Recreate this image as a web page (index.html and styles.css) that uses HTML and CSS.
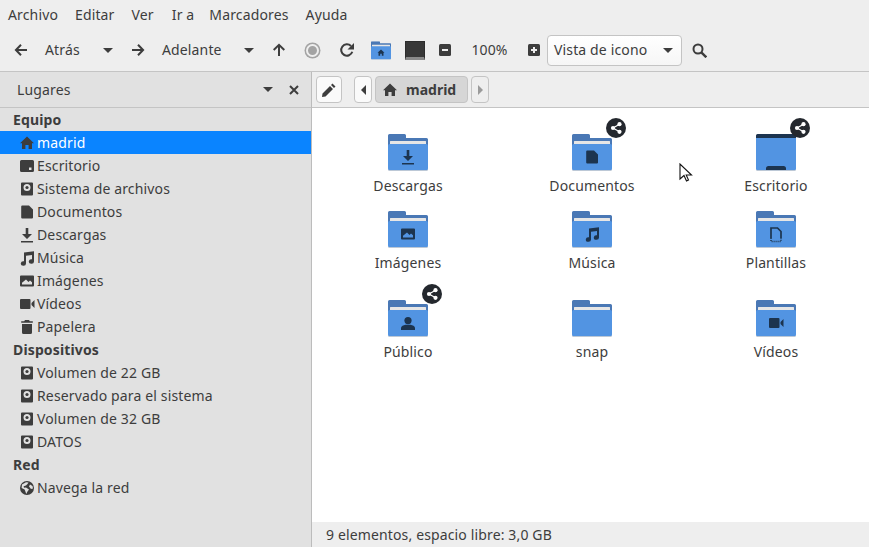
FILE: index.html
```html
<!DOCTYPE html>
<html lang="es">
<head>
  <meta charset="UTF-8" />
  <title>madrid</title>
  <meta name="viewport" content="width=device-width, initial-scale=1">
  <link rel="stylesheet" href="styles.css">
</head>
<body>
  <svg class="defs" width="0" height="0">
    <symbol id="i-home" viewBox="0 0 16 16"><path d="M8 1.500 15 8.200h-2V14H9.600v-4H6.400v4H3V8.200H1z"/></symbol>
    <symbol id="i-desktop" viewBox="0 0 16 16"><path fill-rule="evenodd" d="M2.500 2h11A1.500 1.500 0 0 1 15 3.500v9a1.500 1.500 0 0 1-1.500 1.500h-11A1.500 1.500 0 0 1 1 12.500v-9A1.500 1.500 0 0 1 2.500 2zM10 9.500V12h2.500V9.500z"/></symbol>
    <symbol id="i-drive" viewBox="0 0 16 16"><path fill-rule="evenodd" d="M3 1.500h10a1 1 0 0 1 1 1v11a1 1 0 0 1-1 1H3a1 1 0 0 1-1-1v-11a1 1 0 0 1 1-1zM8 3a3.500 3.500 0 1 0 0 7 3.500 3.500 0 0 0 0-7z"/><circle cx="8" cy="6.500" r="1.600"/></symbol>
    <symbol id="i-doc" viewBox="0 0 16 16"><path d="M3.200 1.500H10l4 4v8a1 1 0 0 1-1 1H3.200a1 1 0 0 1-1-1v-11a1 1 0 0 1 1-1z"/></symbol>
    <symbol id="i-down" viewBox="0 0 16 16"><path d="M6.700 1h2.600v6H13l-5 5-5-5h3.700zM2 14h12v1.600H2z"/></symbol>
    <symbol id="i-music" viewBox="0 0 16 16"><path d="M5 2.500 15 1.200v10.300a2.600 2.300 0 1 1-2-2.200V5L7 5.800v7.700a2.600 2.300 0 1 1-2-2.200z"/></symbol>
    <symbol id="i-image" viewBox="0 0 16 16"><path fill-rule="evenodd" d="M2 2.500h12a1 1 0 0 1 1 1v9a1 1 0 0 1-1 1H2a1 1 0 0 1-1-1v-9a1 1 0 0 1 1-1zM3 11.500h10V9.300L11 7.500 9.500 9 7 6.500l-4 3.200z"/></symbol>
    <symbol id="i-video" viewBox="0 0 16 16"><path d="M2 3h8.500a1 1 0 0 1 1 1v8a1 1 0 0 1-1 1H2a1 1 0 0 1-1-1V4a1 1 0 0 1 1-1zM15.500 4v8l-3-3V7z"/></symbol>
    <symbol id="i-trash" viewBox="0 0 16 16"><path d="M6 1h4l.8 1.200h3V3.800H2.200V2.200h3zM3 5h10v8.500a1.500 1.500 0 0 1-1.500 1.500h-7A1.500 1.500 0 0 1 3 13.500z"/></symbol>
    <symbol id="i-net" viewBox="0 0 16 16"><path fill-rule="evenodd" d="M8 1a7 7 0 1 1 0 14A7 7 0 0 1 8 1zM3 4.500 2.600 8l3 1.500 1 2.500.6 2 1.300-2.500 1.500-2-3-2-2 .3-.4-1.500L7 5.500 8.500 4l1-1.500L7 2.300zM11 4.500l-1 2 2 2.500 2-.5-.5-2.500z"/></symbol>
    <symbol id="i-share" viewBox="0 0 20 20"><path fill="none" stroke="#fff" stroke-width="1.200" d="M13.500 6.200 7 10l6.500 3.800"/><circle cx="13.500" cy="6.200" r="2.100" fill="#fff"/><circle cx="13.500" cy="13.800" r="2.100" fill="#fff"/><circle cx="7" cy="10" r="2.100" fill="#fff"/></symbol>
    <symbol id="i-person" viewBox="0 0 16 16"><circle cx="8" cy="5.600" r="3.600"/><path d="M1 15v-2c0-2 2.500-2.800 4.500-3.200h5C12.500 10.200 15 11 15 13v2z"/></symbol>
    <symbol id="i-folder" viewBox="0 0 40 37">
      <path fill="#4a78b5" d="M1.500 0h15A1.500 1.500 0 0 1 18 1.500V4h20.500A1.500 1.500 0 0 1 40 5.500V14H0V1.500A1.500 1.500 0 0 1 1.500 0z"/>
      <path fill="#e6e6e6" d="M2.500 7h35a.5.500 0 0 1 .5.500V12H2V7.500a.5.500 0 0 1 .5-.5z"/>
      <path fill="#bcc8d6" d="M1.500 34h37a1.500 1.500 0 0 1 1.500 1.500 1.500 1.500 0 0 1-1.500 1.500h-37A1.500 1.500 0 0 1 0 35.500 1.500 1.500 0 0 1 1.500 34z"/>
      <path fill="#5294e2" d="M0 11.500A1.500 1.500 0 0 1 1.500 10h37a1.500 1.500 0 0 1 1.500 1.500v23a1.500 1.500 0 0 1-1.500 1.500h-37A1.500 1.500 0 0 1 0 34.500z"/>
    </symbol>
  </svg>

  <div class="app">
    <nav class="menubar">
      <span>Archivo</span>
      <span>Editar</span>
      <span>Ver</span>
      <span class="menu-go">Ir a</span>
      <span>Marcadores</span>
      <span>Ayuda</span>
    </nav>

    <div class="toolbar">
      <span class="tool"><svg class="glyph" width="14" height="14" viewBox="0 0 14 14"><path fill="none" stroke="currentColor" stroke-width="2" d="M13 7H2M7 1.700 1.900 7 7 12.300"/></svg></span>
      <span class="tool-label back-label">Atrás</span>
      <span class="tool"><i class="caret"></i></span>
      <span class="tool"><svg class="glyph" width="14" height="14" viewBox="0 0 14 14"><path fill="none" stroke="currentColor" stroke-width="2" d="M1 7h11M7 1.700 12.100 7 7 12.300"/></svg></span>
      <span class="tool-label fwd-label">Adelante</span>
      <span class="tool"><i class="caret"></i></span>
      <span class="tool"><svg class="glyph" width="14" height="14" viewBox="0 0 14 14"><path fill="none" stroke="currentColor" stroke-width="2" d="M7 13V2M1.700 7 7 1.900 12.300 7"/></svg></span>
      <span class="tool"><span class="stop"></span></span>
      <span class="tool"><svg class="glyph" width="16" height="16" viewBox="0 0 16 16"><path fill="none" stroke="currentColor" stroke-width="2" d="M13.300 9.800A5.700 5.700 0 1 1 12 4"/><path d="M15 1v6.500H8.500z"/></svg></span>
      <span class="tool"><svg class="folder-mini" width="20" height="19" viewBox="0 0 40 37"><use href="#i-folder"/><use href="#i-home" x="12" y="15" width="16" height="16"/></svg></span>
      <span class="tool"><span class="screen"></span></span>
      <span class="tool"><span class="zoom-btn"><i class="bar"></i></span></span>
      <span class="zoom-level">100%</span>
      <span class="tool"><span class="zoom-btn"><i class="bar"></i><i class="bar upright"></i></span></span>
      <div class="combo">
        <span>Vista de icono</span>
        <i class="caret"></i>
      </div>
      <span class="tool"><svg class="glyph" width="15" height="15" viewBox="0 0 15 15"><circle cx="6" cy="6" r="4.500" fill="none" stroke="currentColor" stroke-width="2"/><path fill="none" stroke="currentColor" stroke-width="2.400" d="m9.300 9.300 5 5"/></svg></span>
    </div>

    <div class="body-row">
      <aside class="sidebar">
        <div class="side-head">
          <span class="side-title">Lugares</span>
          <i class="caret"></i>
          <svg class="side-close" width="10" height="10" viewBox="0 0 10 10"><path fill="none" stroke="currentColor" stroke-width="2" d="m1 1 8 8M9 1 1 9"/></svg>
        </div>
        <ul class="places">
          <li class="section">Equipo</li>
          <li class="place active"><svg><use href="#i-home"/></svg>madrid</li>
          <li class="place"><svg><use href="#i-desktop"/></svg>Escritorio</li>
          <li class="place"><svg><use href="#i-drive"/></svg>Sistema de archivos</li>
          <li class="place"><svg><use href="#i-doc"/></svg>Documentos</li>
          <li class="place"><svg><use href="#i-down"/></svg>Descargas</li>
          <li class="place"><svg><use href="#i-music"/></svg>Música</li>
          <li class="place"><svg><use href="#i-image"/></svg>Imágenes</li>
          <li class="place"><svg><use href="#i-video"/></svg>Vídeos</li>
          <li class="place"><svg><use href="#i-trash"/></svg>Papelera</li>
          <li class="section">Dispositivos</li>
          <li class="place"><svg><use href="#i-drive"/></svg>Volumen de 22 GB</li>
          <li class="place"><svg><use href="#i-drive"/></svg>Reservado para el sistema</li>
          <li class="place"><svg><use href="#i-drive"/></svg>Volumen de 32 GB</li>
          <li class="place"><svg><use href="#i-drive"/></svg>DATOS</li>
          <li class="section">Red</li>
          <li class="place"><svg><use href="#i-net"/></svg>Navega la red</li>
        </ul>
      </aside>

      <main class="content">
        <div class="pathbar">
          <button class="path-btn edit"><svg width="16" height="16" viewBox="0 0 16 16"><path d="M11.500 1.500 14.500 4.500 13 6 10 3zM9 4l3 3-7.500 7.500L1 15l.5-3.500z"/></svg></button>
          <button class="path-btn nav"><i class="tri left"></i></button>
          <button class="path-btn current"><svg width="16" height="16"><use href="#i-home"/></svg><b>madrid</b></button>
          <button class="path-btn nav off"><i class="tri right"></i></button>
        </div>

        <div class="files">
          <div class="file">
            <svg class="folder"><use href="#i-folder"/><use href="#i-down" x="12" y="15" width="16" height="16"/></svg>
            <span>Descargas</span>
          </div>
          <div class="file shared">
            <div class="icon-wrap">
              <svg class="folder"><use href="#i-folder"/><use href="#i-doc" x="12" y="15" width="16" height="16"/></svg>
              <svg class="emblem"><use href="#i-share"/></svg>
            </div>
            <span>Documentos</span>
          </div>
          <div class="file shared">
            <div class="icon-wrap">
              <svg class="folder" viewBox="0 0 40 37">
                <path fill="#bcc8d6" d="M0 30h40v5.500a1.500 1.500 0 0 1-1.500 1.500h-37A1.500 1.500 0 0 1 0 35.500z"/>
                <path fill="#5294e2" d="M0 3h40v31.500a1.500 1.500 0 0 1-1.500 1.500h-37A1.500 1.500 0 0 1 0 34.500z"/>
                <path d="M1.500 0h37A1.500 1.500 0 0 1 40 1.500V4H0V1.500A1.500 1.500 0 0 1 1.500 0zM12.500 32h15a2.500 2.500 0 0 1 2.500 2.500V36H10v-1.500a2.500 2.500 0 0 1 2.500-2.500z"/>
              </svg>
              <svg class="emblem"><use href="#i-share"/></svg>
            </div>
            <span>Escritorio</span>
          </div>
          <div class="file">
            <svg class="folder"><use href="#i-folder"/><use href="#i-image" x="12" y="15" width="16" height="16"/></svg>
            <span>Imágenes</span>
          </div>
          <div class="file">
            <svg class="folder"><use href="#i-folder"/><use href="#i-music" x="12" y="15" width="16" height="16"/></svg>
            <span>Música</span>
          </div>
          <div class="file">
            <svg class="folder"><use href="#i-folder"/><path fill="none" stroke="currentColor" stroke-width="1.700" d="M15 27V17h6.500l3.500 3.500V27"/><path fill="none" stroke="currentColor" stroke-width="1.500" stroke-dasharray="1 1" d="M15 27v3.400h10V27"/></svg>
            <span>Plantillas</span>
          </div>
          <div class="file shared">
            <div class="icon-wrap">
              <svg class="folder"><use href="#i-folder"/><use href="#i-person" x="12" y="15" width="16" height="16"/></svg>
              <svg class="emblem"><use href="#i-share"/></svg>
            </div>
            <span>Público</span>
          </div>
          <div class="file">
            <svg class="folder"><use href="#i-folder"/></svg>
            <span>snap</span>
          </div>
          <div class="file">
            <svg class="folder"><use href="#i-folder"/><use href="#i-video" x="12" y="15" width="16" height="16"/></svg>
            <span>Vídeos</span>
          </div>
        </div>

        <div class="statusbar">9 elementos, espacio libre: 3,0 GB</div>
      </main>
    </div>
  </div>

  <svg class="pointer" width="14" height="20" viewBox="0 0 14 20"><path fill="#fff" stroke="#111" stroke-width="1.100" d="M1 1v15l4-3.500 2.500 5.500 2-1L7.200 12H12.500z"/></svg>
</body>
</html>
```

FILE: styles.css
```css
/* Reset */
* {
  margin: 0;
  padding: 0;
  box-sizing: border-box;
}

body {
  font-family: "Noto Sans", sans-serif;
  font-size: 14px;
  letter-spacing: 0.14px;
  color: #3d3d3d;
  background: #eeeeee;
  overflow: hidden;
}

.defs {
  position: absolute;
}

.app {
  display: flex;
  flex-direction: column;
  height: 100vh;
}

svg {
  fill: currentColor;
}

/* Menu bar */
.menubar {
  display: flex;
  align-items: center;
  gap: 17px;
  height: 30px;
  padding: 0 0 2px 8px;
}

.menu-go {
  margin: 0 -2px 0 1px;
}

/* Toolbar */
.toolbar {
  display: grid;
  grid-template-columns: 42px 50px 32px 28px 82px 30px 30px 36px 34px 34px 34px 26px 63px 26px 135px 34px;
  align-items: center;
  height: 42px;
  padding-bottom: 1px;
  border-bottom: 1px solid #c4c4c4;
}

.tool {
  display: flex;
  align-items: center;
  justify-content: center;
}

.tool-label,
.zoom-level {
  padding-bottom: 2px;
}

.back-label {
  padding-left: 3px;
}

.fwd-label {
  padding-left: 10px;
}

.caret {
  display: block;
  width: 0;
  height: 0;
  border-left: 5px solid transparent;
  border-right: 5px solid transparent;
  border-top: 5px solid #3d3d3d;
}

.stop {
  display: block;
  width: 13px;
  height: 13px;
  border-radius: 50%;
  background: #a3a3a3;
  border: 2px solid #eeeeee;
  box-shadow: 0 0 0 1.500px #a3a3a3;
}

.screen {
  display: block;
  width: 20px;
  height: 19px;
  background: #383838;
  border: 1px solid #2c2c2c;
  border-bottom: 3px solid #8a8a8a;
}

.zoom-btn {
  position: relative;
  display: block;
  width: 12px;
  height: 12px;
  background: #3d3d3d;
  border-radius: 1.500px;
}

.bar {
  position: absolute;
  left: 3px;
  top: 5px;
  width: 6px;
  height: 2px;
  background: #eeeeee;
}

.bar.upright {
  left: 5px;
  top: 3px;
  width: 2px;
  height: 6px;
}

.zoom-level {
  text-align: center;
}

.combo {
  display: flex;
  align-items: center;
  justify-content: space-between;
  height: 31px;
  padding: 0 8px 0 6px;
  background: linear-gradient(#ffffff, #f6f6f6);
  border: 1px solid #c4c4c4;
  border-radius: 4px;
}

.combo span {
  padding-bottom: 2px;
}

/* Sidebar + main */
.body-row {
  flex: 1;
  display: flex;
  min-height: 0;
}

.sidebar {
  width: 312px;
  background: #e1e1e1;
  border-right: 1px solid #bcbcbc;
}

.side-head {
  display: flex;
  align-items: center;
  height: 36px;
  padding: 0 12px 0 17px;
  border-bottom: 1px solid #c4c4c4;
}

.side-title {
  flex: 1;
}

.side-close {
  margin-left: 16px;
}

.places {
  list-style: none;
}

.places li {
  display: flex;
  align-items: center;
  height: 23px;
  white-space: nowrap;
}

.section {
  padding-left: 13px;
  font-weight: bold;
}

.place {
  padding-left: 19px;
}

.place svg {
  width: 16px;
  height: 16px;
  margin-right: 2px;
  flex: none;
}

.place.active {
  background: #0a84ff;
  color: #ffffff;
}

.place.active svg {
  color: #3d3d3d;
}

/* Path bar */
.content {
  flex: 1;
  display: flex;
  flex-direction: column;
  min-width: 0;
}

.pathbar {
  display: flex;
  align-items: center;
  height: 36px;
  padding-left: 4px;
  border-bottom: 1px solid #c4c4c4;
}

.path-btn {
  display: flex;
  align-items: center;
  justify-content: center;
  height: 27px;
  font: inherit;
  letter-spacing: 0;
  color: inherit;
  background: #fafafa;
  border: 1px solid #c4c4c4;
  border-radius: 4px;
}

.edit {
  width: 26px;
  margin-right: 12px;
}

.nav {
  width: 18px;
}

.nav.off {
  background: #eeeeee;
  color: #9a9a9a;
}

.current {
  width: 93px;
  margin: 0 3px;
  padding-left: 6px;
  justify-content: flex-start;
  gap: 8px;
  background: #d6d6d6;
}

.tri {
  display: block;
  width: 0;
  height: 0;
  border-top: 5px solid transparent;
  border-bottom: 5px solid transparent;
}

.tri.left {
  border-right: 5px solid currentColor;
}

.tri.right {
  border-left: 5px solid currentColor;
}

/* Icon grid */
.files {
  flex: 1;
  display: grid;
  grid-template-columns: repeat(3, 184px);
  grid-auto-rows: min-content;
  align-items: end;
  padding: 14px 0 0 4px;
  background: #ffffff;
}

.file {
  display: flex;
  flex-direction: column;
  align-items: center;
  height: 77px;
}

.file.shared {
  height: 89px;
  padding-top: 12px;
}

.file > span {
  margin-top: 5px;
}

.icon-wrap {
  position: relative;
  height: 37px;
}

.folder {
  display: block;
  width: 40px;
  height: 37px;
  color: #1c344f;
}

.folder-mini {
  color: #1c344f;
}

.emblem {
  position: absolute;
  left: 34px;
  top: -16px;
  width: 20px;
  height: 20px;
  background: #24282e;
  border-radius: 50%;
}

.statusbar {
  display: flex;
  align-items: center;
  height: 25px;
  padding: 0 0 1px 14px;
}

.pointer {
  position: absolute;
  left: 678.500px;
  top: 162.500px;
}
```
